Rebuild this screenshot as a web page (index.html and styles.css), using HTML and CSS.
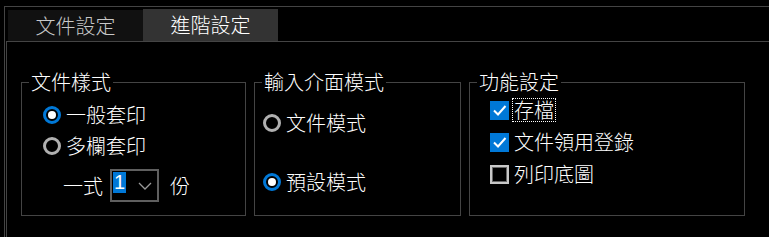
FILE: index.html
```html
<!DOCTYPE html>
<html lang="zh-Hant">
<head>
    <meta charset="UTF-8">
    <title>進階設定</title>
    <link rel="stylesheet" href="styles.css">
</head>
<body>
    <div class="window">
        <div class="tabs">
            <div class="tab">文件設定</div>
            <div class="tab active">進階設定</div>
        </div>
        <div class="panel">
            <fieldset class="group g1">
                <legend>文件樣式</legend>
                <div class="opts">
                    <div class="row r1"><span class="radio on"></span>一般套印</div>
                    <div class="row r2"><span class="radio"></span>多欄套印</div>
                    <div class="row copies">
                        <span>一式</span>
                        <div class="select">
                            <span class="sel-val">1</span>
                            <svg class="chev" width="14" height="8" viewBox="0 0 14 8"><polyline points="1,1 7,7 13,1" fill="none" stroke="#9a9a9a" stroke-width="1.3"/></svg>
                        </div>
                        <span>份</span>
                    </div>
                </div>
            </fieldset>
            <fieldset class="group g2">
                <legend>輸入介面模式</legend>
                <div class="opts">
                    <div class="row"><span class="radio"></span>文件模式</div>
                    <div class="row far"><span class="radio on"></span>預設模式</div>
                </div>
            </fieldset>
            <fieldset class="group g3">
                <legend>功能設定</legend>
                <div class="opts">
                    <div class="row chk"><span class="box on"><svg width="19" height="19" viewBox="0 0 19 19"><polyline points="4,9.5 8,13.5 15.5,5" fill="none" stroke="#fff" stroke-width="2"/></svg></span><span class="focus">存檔</span></div>
                    <div class="row chk"><span class="box on"><svg width="19" height="19" viewBox="0 0 19 19"><polyline points="4,9.5 8,13.5 15.5,5" fill="none" stroke="#fff" stroke-width="2"/></svg></span><span class="lbl">文件領用登錄</span></div>
                    <div class="row chk"><span class="box"></span><span class="lbl">列印底圖</span></div>
                </div>
            </fieldset>
        </div>
    </div>
</body>
</html>
```

FILE: styles.css
```css
*{
    box-sizing: border-box;
}
html, body{
    margin: 0;
    height: 237px;
    overflow: hidden;
}
body{
    background: #000;
    color: #fff;
    font-family: "Noto Sans CJK TC", "Noto Sans", sans-serif;
    font-size: 20px;
    font-weight: 300;
}
.window{
    margin: 6px 0 0 4px;
    height: 231px;
    border-top: 1px solid #444;
    border-left: 1px solid #444;
}
.tabs{
    display: flex;
    align-items: flex-end;
    height: 34px;
    padding: 2px 0 0 3px;
}
.tab{
    width: 135px;
    height: 31px;
    line-height: 31px;
    text-align: center;
    background: #111;
    color: #c8c8c8;
}
.tab.active{
    height: 32px;
    line-height: 32px;
    background: #333;
    color: #fff;
}
.panel{
    margin-left: 1px;
    height: 196px;
    border-top: 1px solid #444;
    border-left: 1px solid #444;
    display: flex;
    gap: 8px;
    padding: 28px 0 0 14px;
}
.group{
    margin: 0;
    padding: 0;
    min-width: 0;
    height: 146px;
    border: 1px solid #444;
}
.group legend{
    margin-left: 7px;
    padding: 0 2px;
    line-height: 24px;
}
.g1{ width: 225px; }
.g2{ width: 207px; }
.g3{ width: 276px; }
.opts{
    display: flex;
    flex-direction: column;
}
.row{
    display: flex;
    align-items: center;
    height: 24px;
    gap: 5px;
    line-height: 24px;
}
.g1 .opts{ padding: 9px 0 0 21px; }
.g1 .r2{ margin-top: 7px; }
.g2 .opts{ padding: 17px 0 0 8px; }
.g2 .far{ margin-top: 35px; }
.g3 .opts{ padding: 4px 0 0 20px; gap: 8px; }
.radio{
    width: 18px;
    height: 18px;
    border-radius: 50%;
    border: 3px solid #b0b0b0;
    display: flex;
    align-items: center;
    justify-content: center;
    flex: none;
}
.radio.on{
    border-color: #0078d7;
}
.radio.on::after{
    content: "";
    width: 8px;
    height: 8px;
    border-radius: 50%;
    background: #fff;
}
.copies{
    height: 33px;
    margin: 11px 0 0 20px;
    gap: 0;
}
.select{
    width: 49px;
    height: 33px;
    margin: 0 11px 0 7px;
    border: 2px solid #5f5f5f;
    display: flex;
    align-items: flex-start;
    padding: 1px 0 0 1px;
}
.sel-val{
    width: 13px;
    height: 21px;
    line-height: 21px;
    background: #0078d7;
    text-align: center;
    font-family: "Liberation Sans", sans-serif;
    font-size: 20px;
    font-weight: 400;
}
.chev{
    margin: 10px 0 0 12px;
}
.chk{
    gap: 3px;
}
.box{
    width: 19px;
    height: 19px;
    flex: none;
    border: 2px solid #c8c8c8;
    box-shadow: inset 0 0 0 1px #666;
}
.box.on{
    border: none;
    box-shadow: none;
    background: #0078d7;
}
.box svg{
    display: block;
}
.focus{
    border: 1px dotted #fff;
    padding: 0 1px;
    line-height: 22px;
}
.lbl{
    padding: 0 2px;
}
```
